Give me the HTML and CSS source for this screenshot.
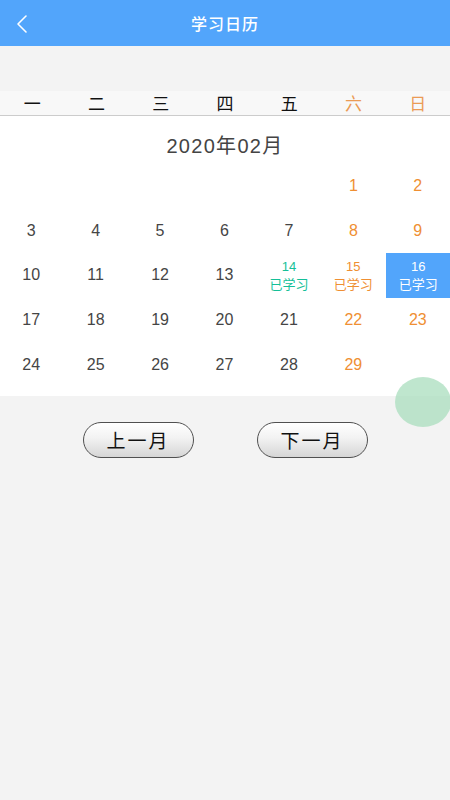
FILE: index.html
```html
<!DOCTYPE html>
<html lang="zh">
<head>
<meta charset="utf-8">
<link rel="stylesheet" href="styles.css">
</head>
<body>
<header class="topbar">
  <span class="back"><svg width="12" height="20" viewBox="0 0 12 20"><path d="M10 2 L2 10 L10 18" fill="none" stroke="#fff" stroke-width="1.6" stroke-linecap="round" stroke-linejoin="round"/></svg></span>
  <h1 class="title">学习日历</h1>
</header>
<div class="spacer"></div>
<div class="weekdays">
  <span>一</span><span>二</span><span>三</span><span>四</span><span>五</span><span class="we">六</span><span class="we">日</span>
</div>
<section class="cal">
  <div class="month">2020年02月</div>
  <div class="grid">
    <span></span><span></span><span></span><span></span><span></span><span class="or">1</span><span class="or">2</span>
    <span>3</span><span>4</span><span>5</span><span>6</span><span>7</span><span class="or">8</span><span class="or">9</span>
    <span>10</span><span>11</span><span>12</span><span>13</span>
    <span class="st gr"><b>14</b><i>已学习</i></span>
    <span class="st or"><b>15</b><i>已学习</i></span>
    <span class="st sel"><b>16</b><i>已学习</i></span>
    <span>17</span><span>18</span><span>19</span><span>20</span><span>21</span><span class="or">22</span><span class="or">23</span>
    <span>24</span><span>25</span><span>26</span><span>27</span><span>28</span><span class="or">29</span><span></span>
  </div>
</section>
<div class="btns">
  <button class="pill">上一月</button>
  <button class="pill">下一月</button>
</div>
<div class="bubble"></div>
</body>
</html>
```
FILE: styles.css
```css
html, body { margin: 0; padding: 0; }
body {
  background: #f3f3f3;
  font-family: "Liberation Sans", "Noto Sans CJK SC", sans-serif;
  width: 450px;
  min-height: 800px;
  position: relative;
  overflow: hidden;
}
.topbar {
  height: 46px;
  background: #52a5fb;
  display: flex;
  align-items: center;
  justify-content: center;
  position: relative;
}
.back {
  position: absolute;
  left: 16px;
  top: 14px;
  width: 12px;
  height: 20px;
  display: flex;
}
.title {
  margin: 0;
  color: #fff;
  font-size: 16px;
  font-weight: 500;
  font-family: "Noto Sans CJK SC", sans-serif;
  letter-spacing: 1px;
}
.spacer { height: 45px; }
.weekdays {
  display: grid;
  grid-template-columns: repeat(7, 1fr);
  height: 24px;
  background: #f8f8f8;
  border-bottom: 1px solid #cccccc;
  font-family: "Noto Sans CJK SC", sans-serif;
  font-size: 17px;
  color: #111;
}
.weekdays span {
  display: flex;
  align-items: center;
  justify-content: center;
  line-height: 24px;
}
.weekdays .we { color: #eb9b55; }
.cal {
  background: #fff;
  padding-bottom: 9px;
}
.month {
  padding-top: 18px;
  line-height: 24px;
  height: 24px;
  text-align: center;
  font-size: 20px;
  letter-spacing: 1.3px;
  color: #444;
  font-family: "Liberation Sans", "Noto Sans CJK SC", sans-serif;
  margin-bottom: 6px;
}
.grid {
  display: grid;
  grid-template-columns: repeat(7, 1fr);
  grid-auto-rows: 44.6px;
  margin-left: -1px;
}
.grid span {
  display: flex;
  flex-direction: column;
  align-items: center;
  justify-content: center;
  font-size: 16px;
  color: #454545;
}
.grid .or { color: #ef8f33; }
.grid .gr { color: #15bf98; }
.grid .st b {
  font-weight: normal;
  font-size: 13px;
  line-height: 16px;
}
.grid .st i {
  font-style: normal;
  font-size: 13px;
  line-height: 17px;
  font-family: "Noto Sans CJK SC", sans-serif;
}
.grid .sel {
  background: #52a5fb;
  color: #fff;
  margin-right: -1px;
}
.btns {
  display: flex;
  justify-content: center;
  gap: 63px;
  margin-top: 26px;
}
.pill {
  width: 111px;
  height: 36px;
  border: 1px solid #505050;
  border-radius: 18px;
  background: linear-gradient(#ffffff, #f2f2f2 45%, #d6d6d6);
  font-family: "Noto Sans CJK SC", sans-serif;
  font-size: 19px;
  color: #111;
  padding: 0;
  letter-spacing: 2px;
}
.bubble {
  position: absolute;
  left: 395px;
  top: 377px;
  width: 56px;
  height: 50px;
  border-radius: 50%;
  background: rgba(170, 222, 190, 0.75);
}
```
